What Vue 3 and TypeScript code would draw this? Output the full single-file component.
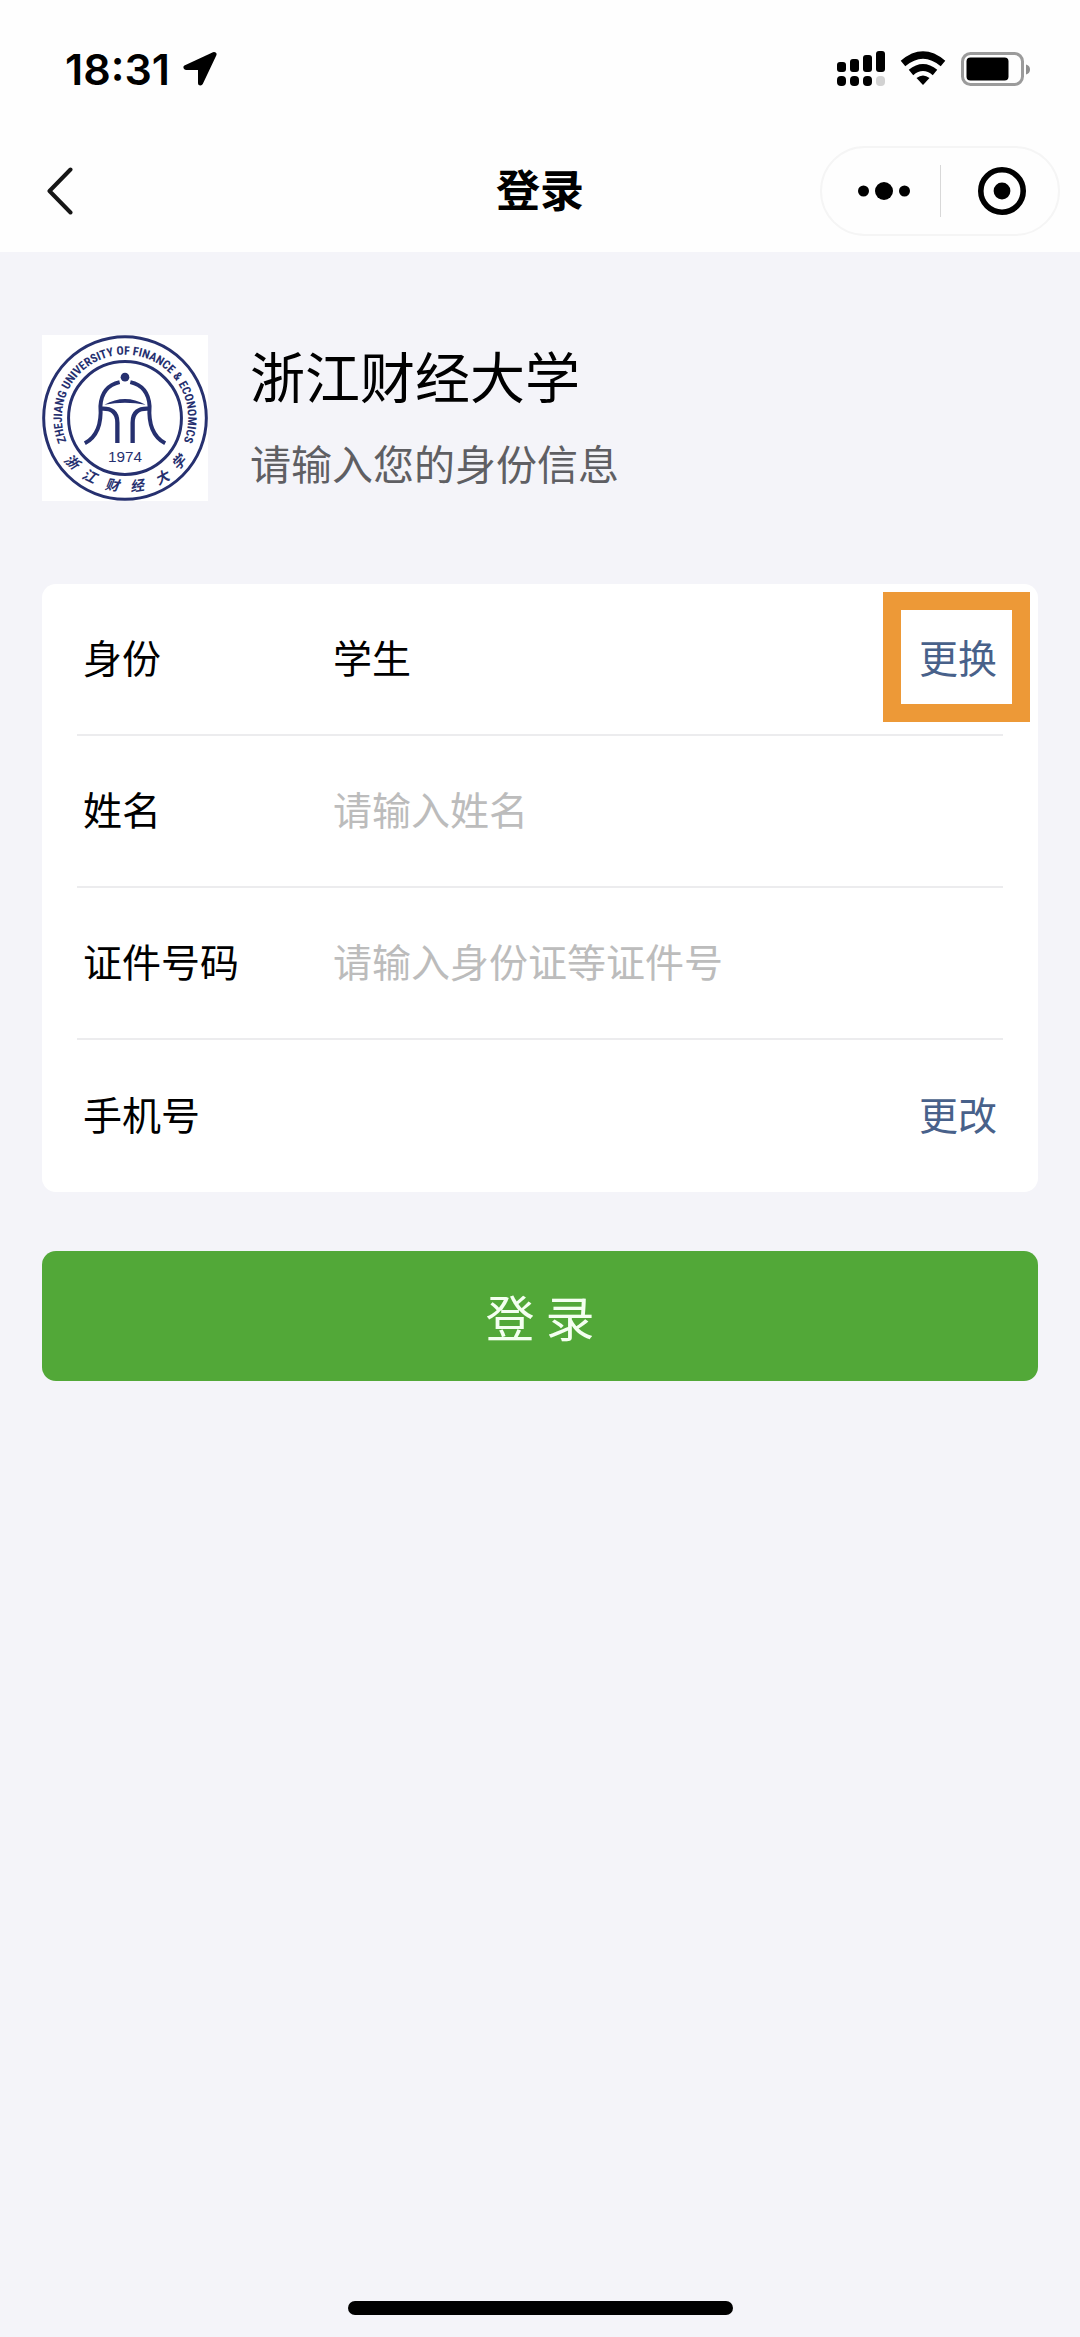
<script setup lang="ts">
import { ref } from 'vue'

interface SealGlyph {
  char: string
  x: number
  y: number
  angle: number
}

const role = ref('学生')
const fullName = ref('')
const idNumber = ref('')
const phone = ref('')

// Characters along the lower rim of the university seal.
const sealGlyphs: SealGlyph[] = [
  { char: '浙', x: 124, y: 426, angle: 42 },
  { char: '江', x: 177, y: 469, angle: 26 },
  { char: '财', x: 245, y: 496, angle: 8 },
  { char: '经', x: 320, y: 498, angle: -8 },
  { char: '大', x: 396, y: 474, angle: -28 },
  { char: '学', x: 446, y: 428, angle: -46 },
]
</script>

<template>
  <div class="page">
    <header class="top">
      <div class="status">
        <div class="status-left">
          <span class="time">18:31</span>
          <svg class="location" viewBox="0 0 36 36" aria-hidden="true">
            <path d="M32 3.5L4 16.5H18.5V32Z" fill="#000" stroke="#000" stroke-width="5" stroke-linejoin="round" />
          </svg>
        </div>
        <div class="status-right">
          <svg class="signal" viewBox="0 0 48 36" aria-hidden="true">
            <rect x="0" y="11" width="9" height="10" rx="3" />
            <rect x="13" y="8" width="9" height="13" rx="3" />
            <rect x="26" y="4" width="9" height="17" rx="3" />
            <rect x="39" y="0" width="9" height="21" rx="3" />
            <rect x="0" y="25" width="9" height="10" rx="4" />
            <rect x="13" y="25" width="9" height="10" rx="4" />
            <rect x="26" y="25" width="9" height="10" rx="4" />
            <rect x="39" y="25" width="9" height="10" rx="4" fill="#d2d2d2" />
          </svg>
          <svg class="wifi" viewBox="0 0 46 36" aria-hidden="true">
            <path d="M3 12.5Q23 -4.5 43 12.5" fill="none" stroke="#000" stroke-width="7" />
            <path d="M11 21.5Q23 11.5 35 21.5" fill="none" stroke="#000" stroke-width="7" />
            <path d="M16.500 27Q23 22 29.500 27L23 34Z" />
          </svg>
          <svg class="battery" viewBox="0 0 70 36" aria-hidden="true">
            <rect x="1.5" y="2.5" width="60" height="31" rx="8" fill="none" stroke="#9b9b9b" stroke-width="3" />
            <rect x="5.5" y="6.5" width="42" height="23" rx="4" />
            <path d="M65 13.5Q69 14.5 69 18.500T65 23.500Z" fill="#8f8f8f" />
          </svg>
        </div>
      </div>

      <nav class="nav">
        <button class="back" type="button" aria-label="返回">
          <svg viewBox="0 0 26 48" aria-hidden="true">
            <path d="M23.5 2.5L2.500 24L23.5 45.5" fill="none" stroke="#161616" stroke-width="4" stroke-linecap="round" stroke-linejoin="round" />
          </svg>
        </button>
        <h1 class="title">登录</h1>
        <div class="capsule">
          <button class="capsule-button" type="button" aria-label="更多">
            <svg class="dots" viewBox="0 0 52 18" aria-hidden="true">
              <circle cx="5.5" cy="9" r="5.5" />
              <circle cx="26" cy="9" r="9" />
              <circle cx="46.5" cy="9" r="5.5" />
            </svg>
          </button>
          <span class="capsule-line"></span>
          <button class="capsule-button" type="button" aria-label="关闭">
            <svg class="target" viewBox="0 0 48 48" aria-hidden="true">
              <circle cx="24" cy="24" r="21.2" fill="none" stroke="#000" stroke-width="5.6" />
              <circle cx="24" cy="24" r="8.4" />
            </svg>
          </button>
        </div>
      </nav>
    </header>

    <main class="content">
      <section class="school">
        <svg class="seal" viewBox="34 44 500 500" role="img" aria-label="浙江财经大学校徽">
          <defs>
            <path id="seal-arc" d="M112 374A190 190 0 1 1 456 374" />
          </defs>
          <g fill="none" stroke="#26306f">
            <circle cx="284" cy="294" r="245" stroke-width="9" />
            <circle cx="284" cy="294" r="170" stroke-width="9" />
            <path d="M268 186Q214 198 210 258Q216 342 163 370" stroke-width="12" />
            <path d="M300 186Q354 198 358 258Q352 342 405 370" stroke-width="12" />
            <path d="M210 266Q261 262 261 308V369" stroke-width="13" />
            <path d="M358 266Q307 262 307 308V369" stroke-width="13" />
          </g>
          <g fill="#26306f">
            <circle cx="284" cy="171" r="13" />
            <path d="M222 254Q284 220 346 254Q284 242 222 254Z" />
            <text class="seal-year" x="284" y="427" text-anchor="middle">1974</text>
            <text class="seal-latin">
              <textPath href="#seal-arc" startOffset="50%" text-anchor="middle">ZHEJIANG UNIVERSITY OF FINANCE &amp; ECONOMICS</textPath>
            </text>
            <text
              v-for="glyph in sealGlyphs"
              :key="glyph.char"
              class="seal-han"
              text-anchor="middle"
              :transform="`translate(${glyph.x} ${glyph.y}) rotate(${glyph.angle})`"
              y="15"
            >{{ glyph.char }}</text>
          </g>
        </svg>
        <div class="school-text">
          <h2 class="school-name">浙江财经大学</h2>
          <p class="school-hint">请输入您的身份信息</p>
        </div>
      </section>

      <form class="form" @submit.prevent>
        <div class="card">
          <div class="row">
            <label class="label" for="role">身份</label>
            <output id="role" class="field">{{ role }}</output>
            <button class="link marked" type="button">更换</button>
          </div>
          <div class="row">
            <label class="label" for="full-name">姓名</label>
            <input id="full-name" v-model="fullName" class="field" type="text" placeholder="请输入姓名" />
          </div>
          <div class="row">
            <label class="label" for="id-number">证件号码</label>
            <input id="id-number" v-model="idNumber" class="field" type="text" placeholder="请输入身份证等证件号" />
          </div>
          <div class="row">
            <label class="label" for="phone">手机号</label>
            <input id="phone" v-model="phone" class="field" type="tel" />
            <button class="link" type="button">更改</button>
          </div>
        </div>
        <button class="submit" type="submit">登 录</button>
      </form>
    </main>

    <div class="home-bar"></div>
  </div>
</template>

<style>
body {
  margin: 0;
  background: #f4f4f9;
}
</style>

<style scoped>
.page {
  display: flex;
  flex-direction: column;
  min-height: 100vh;
  box-sizing: border-box;
  padding-bottom: 22px;
  background: #f4f4f9;
  color: #000;
  font-family: "Noto Sans CJK SC", sans-serif;
}

button,
input {
  margin: 0;
  padding: 0;
  border: 0;
  background: none;
  color: inherit;
  font: inherit;
}

svg {
  display: block;
  flex: none;
}

.top {
  background: #fefefe;
}

.status {
  display: flex;
  justify-content: space-between;
  align-items: center;
  height: 122px;
  padding: 8px 49px 0 65px;
}

.status-left,
.status-right {
  display: flex;
  align-items: center;
}

.status-left {
  gap: 12px;
}

.status-right {
  gap: 15px;
}

.time {
  font-family: Inter, sans-serif;
  font-size: 43px;
  font-weight: 600;
  line-height: 52px;
}

.location {
  width: 36px;
  height: 36px;
}

.signal {
  width: 48px;
  height: 36px;
}

.wifi {
  width: 46px;
  height: 36px;
}

.battery {
  width: 70px;
  height: 36px;
}

.nav {
  display: grid;
  grid-template-columns: 1fr auto 1fr;
  align-items: center;
  height: 122px;
  padding: 0 20px;
}

.back {
  justify-self: start;
  padding: 0 27px;
}

.back svg {
  width: 26px;
  height: 48px;
}

.title {
  margin: 0;
  padding-bottom: 6px;
  font-size: 44px;
  font-weight: 700;
  line-height: 64px;
}

.capsule {
  display: flex;
  justify-self: end;
  align-items: center;
  width: 240px;
  height: 90px;
  box-sizing: border-box;
  border: 2px solid #f5f5f5;
  border-radius: 45px;
}

.capsule-button {
  display: flex;
  flex: 1;
  justify-content: center;
  align-items: center;
  height: 100%;
  padding-left: 6px;
}

.capsule-line {
  width: 1px;
  height: 52px;
  background: #d8d8d8;
}

.dots {
  width: 52px;
  height: 18px;
}

.target {
  width: 48px;
  height: 48px;
}

.content {
  padding: 83px 42px;
}

.school {
  display: flex;
  align-items: center;
  gap: 42px;
  margin-bottom: 83px;
}

.seal {
  width: 166px;
  height: 166px;
  background: #fff;
}

.seal-year {
  font-family: "Liberation Sans", sans-serif;
  font-size: 46px;
}

.seal-latin {
  font-family: "Liberation Sans Narrow", "Roboto Condensed", "Liberation Sans", sans-serif;
  font-size: 36px;
  font-weight: 700;
}

.seal-han {
  font-size: 42px;
  font-style: italic;
  font-weight: 700;
}

.school-text {
  display: grid;
  gap: 12px;
}

.school-name,
.school-hint {
  margin: 0;
  font-weight: 400;
  line-height: 76px;
}

.school-name {
  font-size: 55px;
}

.school-hint {
  color: #5f5f63;
  font-size: 41px;
}

.card {
  padding: 0 35px;
  border-radius: 14px;
  background: #fff;
  font-size: 39px;
  line-height: 56px;
}

.row {
  display: flex;
  align-items: center;
  height: 152px;
  box-sizing: border-box;
  padding: 0 6px 6px;
  border-bottom: 2px solid #ececee;
}

.row:last-child {
  border-bottom: 0;
}

.label {
  flex: none;
  width: 250px;
}

.field {
  flex: 1;
  min-width: 0;
  outline: 0;
}

.field::placeholder {
  color: #bcbcbc;
  opacity: 1;
}

.link {
  flex: none;
  color: #48618a;
}

.marked {
  position: relative;
}

.marked::after {
  position: absolute;
  inset: -36px -33px -38px -36px;
  border: 18px solid #ed9937;
  content: "";
}

.submit {
  display: block;
  width: 100%;
  height: 130px;
  margin-top: 59px;
  border-radius: 14px;
  background: #52a838;
  color: #f4fff0;
  font-size: 49px;
  line-height: 72px;
}

.home-bar {
  width: 385px;
  height: 14px;
  margin: auto auto 0;
  border-radius: 7px;
  background: #000;
}
</style>
